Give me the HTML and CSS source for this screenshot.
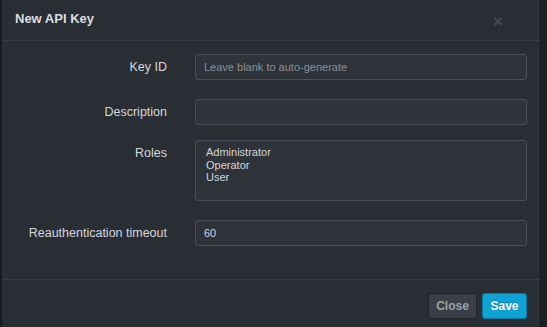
FILE: index.html
```html
<!DOCTYPE html>
<html>
<head>
<meta charset="utf-8">
<link rel="stylesheet" href="styles.css">
</head>
<body>
<div class="modal">
  <div class="modal-header">
    <span class="title">New API Key</span>
    <span class="close-x">&times;</span>
  </div>
  <div class="modal-body">
    <div class="row">
      <label class="label">Key ID</label>
      <input class="field" type="text" placeholder="Leave blank to auto-generate">
    </div>
    <div class="row row-tight">
      <label class="label">Description</label>
      <input class="field" type="text">
    </div>
    <div class="row">
      <label class="label">Roles</label>
      <div class="listbox">
        <div class="opt">Administrator</div>
        <div class="opt">Operator</div>
        <div class="opt">User</div>
      </div>
    </div>
    <div class="row row-last">
      <label class="label">Reauthentication timeout</label>
      <input class="field" type="text" value="60">
    </div>
  </div>
  <div class="modal-footer">
    <button class="btn btn-close">Close</button>
    <button class="btn btn-save">Save</button>
  </div>
</div>
</body>
</html>
```
FILE: styles.css
```css
html, body {
  margin: 0;
  padding: 0;
  height: 100%;
  overflow: hidden;
}
body {
  background: #1c1f24;
  font-family: "Liberation Sans", Arial, Helvetica, sans-serif;
}
.modal {
  margin-left: 1px;
  width: 540px;
  height: 327px;
  box-sizing: border-box;
  background: #292d34;
  border-left: 1px solid #16181c;
  border-right: 1px solid #16181c;
}
.modal-header {
  height: 41px;
  box-sizing: border-box;
  border-bottom: 1px solid #3a3f47;
  display: flex;
  align-items: center;
  justify-content: space-between;
  padding: 0 37px 0 13px;
}
.title {
  font-size: 13px;
  font-weight: bold;
  color: #dcdee1;
  margin-top: -3px;
}
.close-x {
  font-size: 17px;
  font-weight: bold;
  color: #474c54;
  line-height: 1;
  margin-top: 2px;
}
.modal-body {
  padding: 13px 0 33px 0;
  border-bottom: 1px solid #3a3f47;
}
.row {
  display: flex;
  align-items: flex-start;
  gap: 28px;
  margin-bottom: 19px;
}
.row-tight {
  margin-bottom: 15px;
}
.row-last {
  margin-bottom: 0;
}
.label {
  width: 165px;
  flex: none;
  text-align: right;
  font-size: 12.5px;
  line-height: 26px;
  color: #d5d7da;
}
.field {
  width: 332px;
  height: 26px;
  box-sizing: border-box;
  margin: 0;
  background: #2e333a;
  border: 1px solid #4a5059;
  border-radius: 3px;
  padding: 0 8px;
  font-family: "Liberation Sans", Arial, Helvetica, sans-serif;
  font-size: 11px;
  color: #d3d5d8;
  outline: none;
}
.field::placeholder {
  color: #8b9097;
}
.listbox {
  width: 332px;
  height: 61px;
  box-sizing: border-box;
  background: #2e333a;
  border: 1px solid #4a5059;
  border-radius: 3px;
  padding: 5px 10px;
}
.opt {
  font-size: 11px;
  line-height: 12.7px;
  color: #d3d5d8;
}
.modal-footer {
  display: flex;
  justify-content: flex-end;
  gap: 5px;
  padding: 13px 13px 0 0;
}
.btn {
  height: 26px;
  box-sizing: border-box;
  border-radius: 3px;
  font-family: "Liberation Sans", Arial, Helvetica, sans-serif;
  font-size: 12px;
  font-weight: bold;
  padding: 0;
  margin: 0;
}
.btn-close {
  width: 49px;
  background: #3a3f47;
  border: 1px solid #1e2126;
  color: #9ea2a8;
}
.btn-save {
  width: 45px;
  background: #0fa3d4;
  border: 1px solid #0b7aa0;
  color: #ffffff;
  text-shadow: 0 -1px 0 rgba(0,0,0,0.25);
}
```
